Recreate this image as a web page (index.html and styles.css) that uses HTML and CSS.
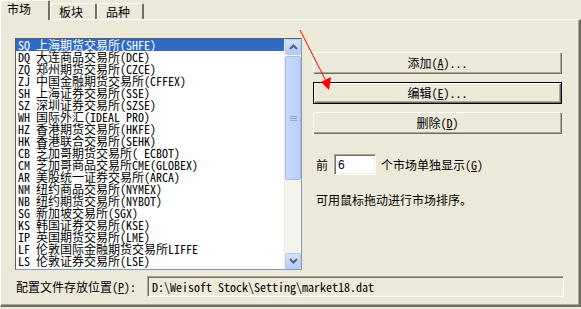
FILE: index.html
```html
<!DOCTYPE html>
<html lang="zh-CN">
<head>
    <meta charset="UTF-8">
    <title>市场设置</title>
    <link rel="stylesheet" href="styles.css">
</head>
<body>
    <div class="tabs">
        <div class="tab active">市场</div>
        <div class="tab">板块</div>
        <div class="tab">品种</div>
    </div>

    <div class="panel">
        <div class="main">
            <div class="listbox">
                <ul class="items">
                    <li class="sel">SQ 上海期货交易所(SHFE)</li>
                    <li>DQ 大连商品交易所(DCE)</li>
                    <li>ZQ 郑州期货交易所(CZCE)</li>
                    <li>ZJ 中国金融期货交易所(CFFEX)</li>
                    <li>SH 上海证券交易所(SSE)</li>
                    <li>SZ 深圳证券交易所(SZSE)</li>
                    <li>WH 国际外汇(IDEAL PRO)</li>
                    <li>HZ 香港期货交易所(HKFE)</li>
                    <li>HK 香港联合交易所(SEHK)</li>
                    <li>CB 芝加哥期货交易所( ECBOT)</li>
                    <li>CM 芝加哥商品交易所CME(GLOBEX)</li>
                    <li>AR 美股统一证券交易所(ARCA)</li>
                    <li>NM 纽约商品交易所(NYMEX)</li>
                    <li>NB 纽约期货交易所(NYBOT)</li>
                    <li>SG 新加坡交易所(SGX)</li>
                    <li>KS 韩国证券交易所(KSE)</li>
                    <li>IP 英国期货交易所(LME)</li>
                    <li>LF 伦敦国际金融期货交易所LIFFE</li>
                    <li>LS 伦敦证券交易所(LSE)</li>
                </ul>
                <div class="scrollbar">
                    <div class="sb-btn">
                        <svg width="9" height="6" viewBox="0 0 9 6"><path d="M1 5 L4.5 1.5 L8 5" fill="none" stroke="#4d6185" stroke-width="2"/></svg>
                    </div>
                    <div class="sb-track">
                        <div class="thumb">
                            <svg width="7" height="7" viewBox="0 0 7 7"><path d="M0 1.5H7M0 3.5H7M0 5.5H7" stroke="#8ca5e0" stroke-width="1"/></svg>
                        </div>
                    </div>
                    <div class="sb-btn">
                        <svg width="9" height="6" viewBox="0 0 9 6"><path d="M1 1 L4.5 4.5 L8 1" fill="none" stroke="#4d6185" stroke-width="2"/></svg>
                    </div>
                </div>
            </div>

            <div class="side">
                <button class="btn">添加(<u>A</u>)...</button>
                <button class="btn default">编辑(<u>E</u>)...</button>
                <button class="btn">删除(<u>D</u>)</button>

                <div class="count-row">
                    <span>前</span>
                    <input class="count" type="text" value="6">
                    <span>个市场单独显示(<u>G</u>)</span>
                </div>
                <p class="hint">可用鼠标拖动进行市场排序。</p>
            </div>
        </div>

        <div class="path-row">
            <label class="path-label">配置文件存放位置(<u>P</u>):</label>
            <div class="path">D:\Weisoft Stock\Setting\market18.dat</div>
        </div>
    </div>

    <svg class="arrow" width="581" height="309" viewBox="0 0 581 309">
        <line x1="300" y1="30" x2="326" y2="81" stroke="#ff0000" stroke-width="1"/>
        <polygon points="321,82 331,77 329,90" fill="#ff0000"/>
    </svg>
</body>
</html>
```

FILE: styles.css
```css
body { margin: 0; width: 581px; height: 309px; overflow: hidden; background: #ece9d8; font: 12px/12px "Noto Sans Mono CJK SC", "Noto Sans CJK SC", monospace; color: #000; position: relative; }

.tabs { display: flex; height: 19px; align-items: flex-end; }
.tab { height: 16px; padding: 0 9px 0 8px; line-height: 15px; border-top: 1px solid #fff; border-left: 1px solid #fff; border-right: 2px solid; border-right-color: #716f64; box-sizing: border-box; width: 47px; border-radius: 2px 2px 0 0; }
.tab.active { height: 20px; width: 50px; line-height: 16px; padding-left: 6px; margin-bottom: -1px; background: #ece9d8; position: relative; z-index: 1; }

.panel { height: 288px; box-sizing: border-box; border-top: 1px solid #fff; border-left: 1px solid #fff; border-right: 2px solid #716f64; border-bottom: 2px solid #716f64; box-shadow: inset -1px -1px 0 #aca899; padding: 18px 0 0 14px; }

.main { display: flex; align-items: flex-start; }

.listbox { width: 287px; height: 232px; box-sizing: border-box; border: 1px solid #7f9db9; border-top-color: #5d5d5d; border-left-color: #5d5d5d; background: #fff; display: flex; }
.items { list-style: none; margin: 0; padding: 0; flex: 1; overflow: hidden; }
.items li { height: 12px; line-height: 12px; padding-left: 2px; white-space: nowrap; }
.items li.sel { background: #316ac5; color: #fff; }

.scrollbar { width: 16px; display: flex; flex-direction: column; background: #f4f3ee; border-left: 1px solid #eeede5; }
.sb-btn { height: 16px; box-sizing: border-box; border: 1px solid #b9caef; border-radius: 2px; background: linear-gradient(#d6e1fb, #b7cbf7); display: flex; align-items: center; justify-content: center; }
.sb-track { flex: 1; padding: 1px 0; }
.thumb { height: 124px; box-sizing: border-box; border: 1px solid #a4b9ec; border-radius: 2px; background: linear-gradient(90deg, #c9d8fb, #bcd0fa); display: flex; align-items: center; justify-content: center; }
.thumb svg { display: block; }

.side { width: 249px; margin: 14px 0 0 11px; display: flex; flex-direction: column; }
.btn { height: 22px; margin: 0 0 8px; padding: 0; font: inherit; line-height: 12px; background: #ece9d8; border: none; box-shadow: inset 1px 1px 0 #fff, inset -1px -1px 0 #716f64, inset -2px -2px 0 #aca899; color: #000; }
.btn.default { box-shadow: inset 0 0 0 1px #000, inset 2px 2px 0 #fff, inset -2px -2px 0 #716f64, inset -3px -3px 0 #aca899; }

.count-row { display: flex; align-items: center; margin-top: 12px; padding-left: 3px; height: 21px; }
.count { width: 42px; height: 21px; box-sizing: border-box; margin: 0 5px 0 6px; padding: 0 0 0 3px; border: 1px solid; border-color: #aca899 #fff #fff #aca899; box-shadow: inset 1px 1px 0 #716f64, inset -1px -1px 0 #f1efe2; font: 12px "Liberation Sans", sans-serif; outline: none; }
.hint { margin: 19px 0 0; padding-left: 3px; }

.path-row { display: flex; align-items: center; margin-top: 6px; }
.path-label { width: 131px; padding-left: 1px; }
.path { width: 417px; height: 21px; box-sizing: border-box; padding-left: 4px; line-height: 19px; border: 1px solid; border-color: #aca899 #fff #fff #aca899; box-shadow: inset 1px 1px 0 #716f64, inset -1px -1px 0 #f1efe2; white-space: nowrap; }

.arrow { position: absolute; left: 0; top: 0; pointer-events: none; }
```
